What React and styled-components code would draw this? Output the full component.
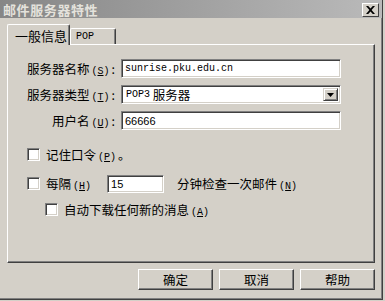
import React from "react";
import styled, { createGlobalStyle } from "styled-components";

const GlobalStyle = createGlobalStyle`
  html, body {
    margin: 0;
    padding: 0;
    background: #d4d0c8;
  }
  body {
    font-family: "Noto Sans CJK SC", "Liberation Sans", sans-serif;
    font-size: 12px;
    color: #000;
  }
`;

const K = ({ c }) => (
  <Key>
    (<u>{c}</u>)
  </Key>
);

export default function App() {
  return (
    <>
      <GlobalStyle />
      <Window>
        <TitleBar>
          <Title>邮件服务器特性</Title>
          <CloseButton>
            <svg width="9" height="8" viewBox="0 0 9 8">
              <path d="M0 0h2.2l2.3 2.6L6.8 0H9L5.6 4 9 8H6.8L4.5 5.4 2.2 8H0l3.4-4z" fill="#000" />
            </svg>
          </CloseButton>
        </TitleBar>

        <Body>
          <TabStrip>
            <Tab $active>一般信息</Tab>
            <Tab>
              <Mono>POP</Mono>
            </Tab>
          </TabStrip>

          <Panel>
            <FormGrid>
              <Label>
                服务器名称<K c="S" />:
              </Label>
              <Field>
                <Mono>sunrise.pku.edu.cn</Mono>
              </Field>

              <Label>
                服务器类型<K c="T" />:
              </Label>
              <Field $select>
                <Mono>POP3</Mono>&nbsp;服务器
                <DropButton>
                  <svg width="7" height="4" viewBox="0 0 7 4">
                    <path d="M0 0h7L3.5 4z" fill="#000" />
                  </svg>
                </DropButton>
              </Field>

              <Label>
                用户名<K c="U" />:
              </Label>
              <Field>
                <Plain>66666</Plain>
              </Field>
            </FormGrid>

            <CheckRow $top={15}>
              <CheckBox />
              <span>
                记住口令<K c="P" />。
              </span>
            </CheckRow>

            <CheckRow $top={10}>
              <CheckBox />
              <span>
                每隔<K c="H" />
              </span>
              <SmallField>
                <Plain>15</Plain>
              </SmallField>
              <span>
                分钟检查一次邮件<K c="N" />
              </span>
            </CheckRow>

            <CheckRow $top={7} $indent={37}>
              <CheckBox />
              <span>
                自动下载任何新的消息<K c="A" />
              </span>
            </CheckRow>
          </Panel>

          <ButtonRow>
            <Button>确定</Button>
            <Button>取消</Button>
            <Button>帮助</Button>
          </ButtonRow>
        </Body>
      </Window>
    </>
  );
}

const Window = styled.div`
  width: 383px;
  height: 300px;
  box-sizing: border-box;
  background: #d4d0c8;
  border-right: 1px solid #404040;
  border-bottom: 1px solid #404040;
  box-shadow: inset -1px -1px 0 #808080;
  display: flex;
  flex-direction: column;
`;

const TitleBar = styled.div`
  height: 18px;
  display: flex;
  align-items: center;
  justify-content: space-between;
  padding: 0 3px 0 3px;
  background: linear-gradient(to right, #868686, #bababa);
`;

const Title = styled.span`
  color: #e4e2dc;
  font-weight: bold;
  font-size: 13px;
  letter-spacing: 0.6px;
`;

const CloseButton = styled.div`
  width: 17px;
  height: 14px;
  box-sizing: border-box;
  margin-top: 1px;
  background: #d4d0c8;
  border-top: 1px solid #fff;
  border-left: 1px solid #fff;
  border-right: 1px solid #404040;
  border-bottom: 1px solid #404040;
  display: flex;
  align-items: center;
  justify-content: center;
`;

const Body = styled.div`
  flex: 1;
  display: flex;
  flex-direction: column;
  padding: 6px 0 0 7px;
`;

const TabStrip = styled.div`
  display: flex;
  align-items: flex-end;
  height: 20px;
  position: relative;
  z-index: 1;
`;

const Tab = styled.div`
  box-sizing: border-box;
  height: ${(p) => (p.$active ? "21px" : "16px")};
  margin-bottom: ${(p) => (p.$active ? "-1px" : "0")};
  width: ${(p) => (p.$active ? "63px" : "46px")};
  padding-left: ${(p) => (p.$active ? "7px" : "5px")};
  font-size: ${(p) => (p.$active ? "13px" : "12px")};
  display: flex;
  align-items: center;
  background: #d4d0c8;
  border-top: 1px solid #fff;
  border-left: 1px solid #fff;
  border-right: 1px solid #404040;
  box-shadow: inset -1px 0 0 #808080;
  border-radius: 2px 2px 0 0;
`;

const Mono = styled.span`
  font-family: "Liberation Mono", monospace;
  font-size: 10px;
`;

const Plain = styled.span`
  font-family: "Liberation Sans", sans-serif;
  font-size: 11px;
`;

const Key = styled.span`
  font-family: "Liberation Mono", monospace;
  font-size: 10px;
  margin: 0 2px 0 2px;
`;

const Panel = styled.div`
  width: 368px;
  height: 219px;
  box-sizing: border-box;
  border-top: 1px solid #fff;
  border-left: 1px solid #fff;
  border-right: 1px solid #404040;
  border-bottom: 1px solid #404040;
  box-shadow: inset -1px -1px 0 #808080;
  padding-top: 14px;
`;

const FormGrid = styled.div`
  display: grid;
  grid-template-columns: 107px 220px;
  column-gap: 6px;
  row-gap: 7px;
  align-items: center;
`;

const Label = styled.div`
  text-align: right;
  white-space: nowrap;
  font-size: 12.5px;
`;

const Field = styled.div`
  position: relative;
  height: 19px;
  box-sizing: border-box;
  background: #fff;
  border-top: 1px solid #808080;
  border-left: 1px solid #808080;
  border-right: 1px solid #fff;
  border-bottom: 1px solid #fff;
  box-shadow: inset 1px 1px 0 #404040, inset -1px -1px 0 #d4d0c8;
  display: flex;
  align-items: center;
  padding-left: ${(p) => (p.$select ? "4px" : "3px")};
  font-size: 12.5px;
  white-space: nowrap;
`;

const DropButton = styled.div`
  position: absolute;
  right: 2px;
  top: 2px;
  width: 15px;
  height: 13px;
  box-sizing: border-box;
  background: #d4d0c8;
  border-top: 1px solid #d4d0c8;
  border-left: 1px solid #d4d0c8;
  border-right: 1px solid #404040;
  border-bottom: 1px solid #404040;
  box-shadow: inset 1px 1px 0 #fff, inset -1px -1px 0 #808080;
  display: flex;
  align-items: center;
  justify-content: center;
`;

const CheckRow = styled.div`
  display: flex;
  align-items: center;
  gap: 6px;
  margin-top: ${(p) => p.$top}px;
  padding-left: ${(p) => p.$indent || 19}px;
  font-size: 12.5px;
  white-space: nowrap;
`;

const CheckBox = styled.div`
  width: 13px;
  height: 13px;
  box-sizing: border-box;
  background: #fff;
  border-top: 1px solid #808080;
  border-left: 1px solid #808080;
  border-right: 1px solid #fff;
  border-bottom: 1px solid #fff;
  box-shadow: inset 1px 1px 0 #404040, inset -1px -1px 0 #d4d0c8;
  flex-shrink: 0;
`;

const SmallField = styled(Field)`
  width: 57px;
  height: 18px;
  margin: 0 7px 0 8px;
`;

const ButtonRow = styled.div`
  display: flex;
  justify-content: flex-end;
  gap: 6px;
  padding: 6px 1px 0 0;
  width: 368px;
`;

const Button = styled.div`
  width: 75px;
  height: 21px;
  box-sizing: border-box;
  background: #d4d0c8;
  border-top: 1px solid #fff;
  border-left: 1px solid #fff;
  border-right: 1px solid #404040;
  border-bottom: 1px solid #404040;
  box-shadow: inset -1px -1px 0 #808080;
  display: flex;
  align-items: center;
  justify-content: center;
  font-size: 12.5px;
`;
